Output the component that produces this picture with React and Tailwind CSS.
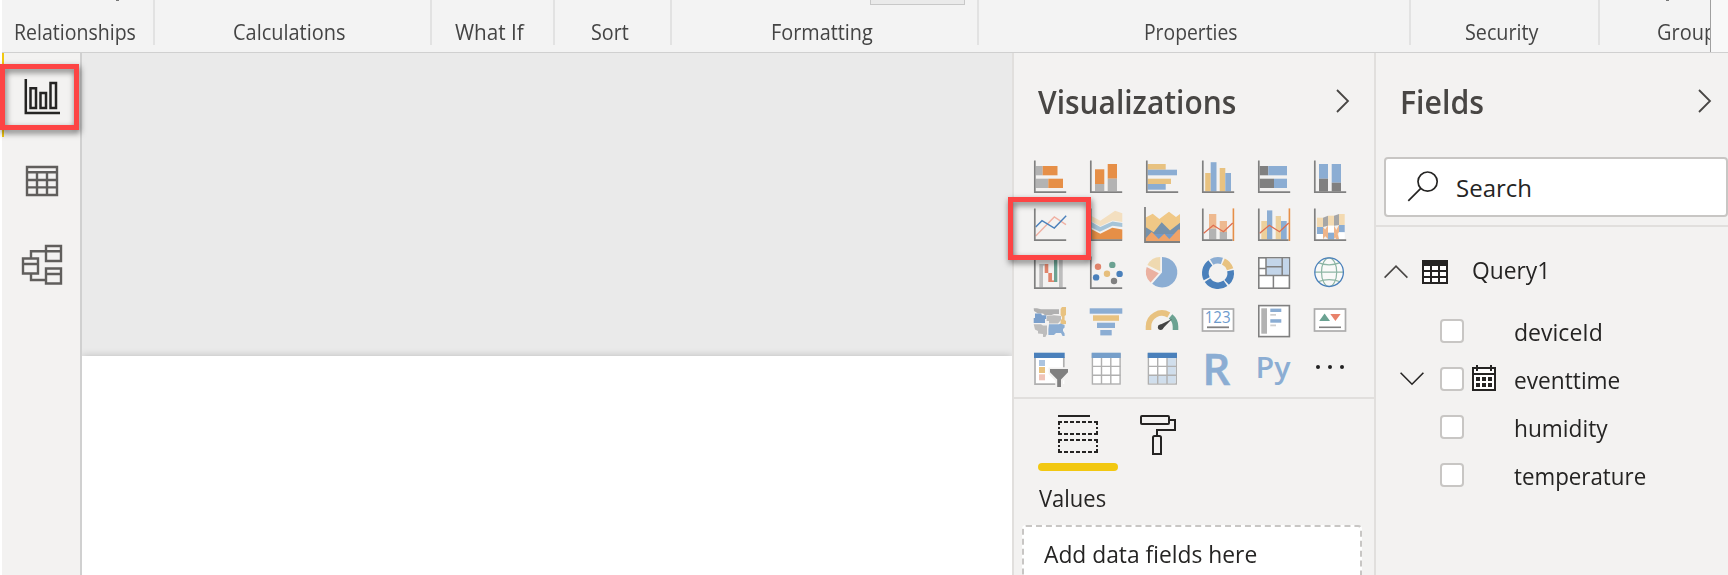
const AXIS = "M2.8 1.4V33.2H34.2";

function Tile({ children }) {
  return (
    <svg viewBox="0 0 36 36" className="h-9 w-9 overflow-visible">
      {children}
    </svg>
  );
}

function Axis() {
  return <path d={AXIS} fill="none" stroke="#808080" strokeWidth="1.7" />;
}

/* Filled rectangles given as [x1, y1, x2, y2, colour]. */
function Bars({ items }) {
  return items.map(([x1, y1, x2, y2, fill], i) => (
    <rect key={i} x={x1} y={y1} width={x2 - x1} height={y2 - y1} fill={fill} />
  ));
}

const G = "#b3b3b3";
const D = "#808080";
const O = "#e68f47";
const Y = "#e8c280";
const B = "#8badd3";
const N = "#4a80bb";

function polar(r, deg) {
  const a = (deg * Math.PI) / 180;
  return `${(18 + r * Math.sin(a)).toFixed(2)} ${(18 - r * Math.cos(a)).toFixed(2)}`;
}

function Arc({ from, to, color }) {
  return (
    <path
      d={`M${polar(12.7, from)}A12.7 12.7 0 0 1 ${polar(12.7, to)}`}
      fill="none"
      stroke={color}
      strokeWidth="6.6"
    />
  );
}

function VisualGrid() {
  return (
    <div className="grid grid-cols-[repeat(6,56px)] gap-y-3 pl-[18px]">
      <Tile>
        <Bars items={[[3.7, 7, 10.7, 16.3, G], [10.7, 7, 25.5, 16.3, O], [3.7, 19.7, 16.3, 29, G], [16.3, 19.7, 31, 29, O]]} />
        <Axis />
      </Tile>
      <Tile>
        <Bars items={[[7, 10.3, 16.3, 25, O], [7, 25, 16.3, 32, G], [19.7, 5, 29, 19.7, O], [19.7, 19.7, 29, 32, G]]} />
        <Axis />
      </Tile>
      <Tile>
        <Bars items={[[3.7, 5, 21.7, 10.7, Y], [3.7, 10.7, 33, 16.3, B], [3.7, 19.7, 27, 25, Y], [3.7, 25, 21.7, 30.7, B]]} />
        <Axis />
      </Tile>
      <Tile>
        <Bars items={[[5.2, 14, 10.7, 32.4, Y], [10.7, 3.2, 16.5, 32.4, B], [19.7, 9, 25.3, 32.4, Y], [25.3, 14, 31, 32.4, B]]} />
        <Axis />
      </Tile>
      <Tile>
        <Bars items={[[3.7, 7, 12.3, 16.3, D], [12.3, 7, 31, 16.3, B], [3.7, 19.7, 18, 29, D], [18, 19.7, 31, 29, B]]} />
        <Axis />
      </Tile>
      <Tile>
        <Bars items={[[7, 5, 16, 19.7, B], [7, 19.7, 16, 32.4, D], [19.7, 5, 29, 23.7, B], [19.7, 23.7, 29, 32.4, D]]} />
        <Axis />
      </Tile>

      <Tile>
        <path d="M3.7 29L22.3 10L34 17.7" fill="none" stroke="#f0b1a3" strokeWidth="1.4" />
        <path d="M3.7 20L10 13.7L22.3 21L34.2 8.7" fill="none" stroke={N} strokeWidth="1.4" />
        <Axis />
      </Tile>
      <Tile>
        <path d="M3 8.7L12.3 13.7L27 3.7L34.3 6.3V15L24.5 13.6L12.3 19.3L3 14Z" fill="#f3dfc0" />
        <path d="M3 14.8L12.3 20L24.5 14.6L34.3 16V20L24.5 18.7L11.8 24.8L3 20.3Z" fill="#a6c4d8" />
        <path d="M3 22L12.3 26.7L24.3 20.7L34.3 22.6V32.4H3Z" fill={O} />
        <Axis />
      </Tile>
      <Tile>
        <path d="M1.8 10.6L8.7 6.7L15.3 11.9L25 4.7L32 10L36 7V34.4H1.8Z" fill="#f0c886" />
        <path d="M1.8 20.2L9.7 25.3L17.7 15.3L26 23.5L36 15.8V34.4H1.8Z" fill="#7591ab" />
        <path d="M5 27H33V34.4H5Z" fill="#7399c6" />
        <path d="M1.8 31.3L7.7 24.7L14.7 32L20.3 26.7L25.3 32L34.3 22.5H36V34.4H1.8Z" fill="#f0a368" />
        <path d="M1 0V35H36" fill="none" stroke="#808080" strokeWidth="1.8" />
      </Tile>
      <Tile>
        <Bars items={[[9, 7, 16.3, 21.7, "#eeb98f"], [9, 21.7, 16.3, 32.4, G], [19.7, 14, 27, 25, "#eeb98f"], [19.7, 25, 27, 32.4, G]]} />
        <path d="M33.4 1.4V34" stroke={O} strokeWidth="1.6" />
        <path d="M2.8 1.4V33.2H32.5" fill="none" stroke="#808080" strokeWidth="1.7" />
        <path d="M3.7 26.3L13.3 18.3L23.5 24.7L32.7 16" fill="none" stroke="#de6e50" strokeWidth="1.3" />
      </Tile>
      <Tile>
        <Bars items={[[5.3, 14, 11, 32.4, "#ecd09c"], [11, 3.4, 16.3, 32.4, B], [19.7, 9, 25, 32.4, "#ecd09c"], [25, 14, 30.7, 32.4, B]]} />
        <path d="M33.4 1.4V34" stroke={O} strokeWidth="1.6" />
        <path d="M2.8 1.4V33.2H32.5" fill="none" stroke="#808080" strokeWidth="1.7" />
        <path d="M3.7 26.3L13.3 18.3L23.5 24.7L32.7 16" fill="none" stroke="#de6e50" strokeWidth="1.3" />
      </Tile>
      <Tile>
        <path d="M11 10.7L16 8.7V18.7L11 20ZM22 8.7L27 7V18L22 18.7Z" fill="#a6a6a6" />
        <path d="M11 27Q14 20 16 18.7V25.7Q13 29 11 32.4ZM11 20L16 26V32L11 27ZM22 18.7Q25 23 27 32H24Q22 29 22 25ZM22 27L27 18V25L22 32Z" fill="#efb58a" />
        <Bars
          items={[
            [5, 10.7, 11, 20, "#f3dab1"], [5, 20, 11, 27, B], [5, 27, 11, 32.4, "#fff"],
            [16, 8.7, 22, 18.7, "#f3dab1"], [16, 18.7, 22, 25.7, "#fff"], [16, 25.7, 22, 32.4, B],
            [27, 7, 32.7, 18, "#f3dab1"], [27, 18, 32.7, 25.3, B], [27, 25.3, 32.7, 32.4, "#fff"],
          ]}
        />
        <Axis />
      </Tile>

      <Tile>
        <Bars
          items={[
            [7.3, 9, 11, 32.4, "#bdbdbd"], [11, 9, 12.7, 10.6, "#bdbdbd"], [12.7, 9, 16.3, 18, "#e0846b"],
            [16.3, 18, 20, 27, "#e0846b"], [20, 25.4, 22, 27, "#e0846b"], [22, 4, 25.3, 27, "#6ba292"], [27, 4, 30.7, 32.4, "#bdbdbd"],
          ]}
        />
        <Axis />
      </Tile>
      <Tile>
        <circle cx="10" cy="11.7" r="3.2" fill="#e0846b" />
        <circle cx="24.3" cy="9.9" r="3.2" fill="#6ba292" />
        <circle cx="19" cy="18.8" r="3.2" fill="#e6be7b" />
        <circle cx="8.1" cy="22.4" r="3.2" fill={N} />
        <circle cx="31.6" cy="18.9" r="3.2" fill={N} />
        <circle cx="26" cy="26" r="3.2" fill="#808080" />
        <Axis />
      </Tile>
      <Tile>
        <path d="M18 17.5V2A15.2 15.2 0 1 1 8.2 28.7Z" fill={B} />
        <path d="M16.2 16.3V2A14.8 14.8 0 0 0 3.4 10Z" fill="#efd9b0" />
        <path d="M14.8 18.2L2.7 12A14.8 14.8 0 0 0 6.6 27.6Z" fill="#ebb1a1" />
      </Tile>
      <Tile>
        <Arc from={-30} to={18} color={B} />
        <Arc from={25} to={73} color="#e8c280" />
        <Arc from={79} to={137} color={N} />
        <Arc from={144} to={236} color={N} />
        <Arc from={243} to={323} color={N} />
      </Tile>
      <Tile>
        <rect x="2.8" y="2.8" width="30.6" height="30.4" fill="#fff" stroke="#808080" strokeWidth="1.6" />
        <path d="M10 3.6H33V20.4H10Z" fill="#c3d5e9" />
        <path d="M3 20.6H33.4M10 3V20.6M3 13.6H10M10 11.7H26.2M26.2 3V20.6M17.4 20.6V33" stroke="#808080" strokeWidth="1.5" />
      </Tile>
      <Tile>
        <circle cx="17.1" cy="17.2" r="14.3" fill="#fff" fillOpacity="0.5" />
        <g fill="none" stroke="#8db5a4" strokeWidth="1.2">
          <ellipse cx="17.1" cy="17.2" rx="7.6" ry="14.3" />
          <path d="M2.8 17.2H31.4M6 7.6Q17.1 12 28.2 7.6M6 26.8Q17.1 22.4 28.2 26.8" />
        </g>
        <circle cx="17.1" cy="17.2" r="14.3" fill="none" stroke={N} strokeWidth="1.3" />
      </Tile>

      <Tile>
        <path d="M1.7 5.3H5L9 6.3H27V11H22L19 12.3H13L11 10.6H6L2 8Z" fill="#b0b0b0" />
        <path d="M3 10.6H9L10 12.3H14.3V16H13V20H1.7V15H3Z" fill="#7a9fcb" />
        <path d="M15 13L22 12.3L29 13V17L26 20.4H17V18H14.5Z" fill="#bdbdbd" />
        <path d="M30 4H34V12L32.6 13V17L34 18V21L28.6 21.4V17L30 16V14L28.6 12V6Z" fill="#e8c280" />
        <path d="M1.7 21.3H9L11 22.4H15V31L13.4 34H11V31L6 30.4V28L3 26.6Z" fill="#bdbdbd" />
        <path d="M17 21.3H27L28.4 20.4L32.6 22V24.6L31 26V28L32.6 30.4V33H30.6L29 30H24L22 32H16.4V26Z" fill="#8badd3" />
      </Tile>
      <Tile>
        <Bars items={[[1.7, 5.3, 34.3, 10.7, B], [5, 12.3, 31, 17.8, Y], [9, 19.7, 27, 25, B], [12.3, 27, 23.7, 32.4, B]]} />
      </Tile>
      <Tile>
        <path d="M4.5 27V23.5A13.4 13.4 0 0 1 24.8 12" fill="none" stroke="#e8c280" strokeWidth="5.6" />
        <path d="M26.6 13.4A13.4 13.4 0 0 1 31.5 23.5V27" fill="none" stroke="#6ba292" strokeWidth="5.6" />
        <path d="M14.6 22.6L28 16L18.8 25.6Z" fill="#444" />
        <circle cx="16.6" cy="24.2" r="2.7" fill="#444" />
      </Tile>
      <Tile>
        <rect x="2.5" y="6" width="31" height="22" fill="#fff" stroke="#acacac" strokeWidth="1.7" />
        <text x="4.7" y="19.6" textLength="26" lengthAdjust="spacingAndGlyphs" fill="#6d9bcc" className="font-['Open_Sans'] text-[15.5px]">
          123
        </text>
        <path d="M7 24.3H29" stroke="#808080" strokeWidth="1.8" />
      </Tile>
      <Tile>
        <rect x="2.8" y="2.6" width="30.6" height="31" fill="#fff" stroke="#808080" strokeWidth="1.6" />
        <Bars items={[[5.3, 5.3, 11, 30.7, G], [14.3, 5.6, 25.3, 9, B], [14.3, 11, 20, 12.7, "#cfcfcf"], [14.3, 16.2, 25.3, 19.7, B], [14.3, 21.5, 20, 23.3, "#cfcfcf"]]} />
      </Tile>
      <Tile>
        <rect x="2.5" y="6" width="31" height="22" fill="#fff" stroke="#acacac" strokeWidth="1.7" />
        <path d="M7.2 18L12.6 10.6L18 18Z" fill="#6ba292" />
        <path d="M18.3 11H28.6L23.4 17.9Z" fill="#e8826b" />
        <path d="M7 24.3H29" stroke="#808080" strokeWidth="1.6" />
      </Tile>

      <Tile>
        <rect x="2.5" y="3" width="29.8" height="30" fill="#fff" />
        <path d="M3 6V33.1H23.5M31.8 6V16.5" fill="none" stroke="#b0b0b0" strokeWidth="1.7" />
        <Bars items={[[2, 1.7, 32.7, 7, N], [7, 9, 13, 15, "#abc4e0"], [7, 16, 13, 22, "#e8c280"], [7, 23.3, 13, 29.3, "#f0c4b8"]]} />
        <path d="M16.5 16.4H37.5V22L31 30V37H23.5V30L16.5 23Z" fill="#f3f2f1" />
        <path d="M18 18H36V21.3L29 28.4V36H25.2V28.4L18 21.3Z" fill="#808080" />
      </Tile>
      <Tile>
        <rect x="4.4" y="3" width="27.7" height="30" fill="#fff" stroke="#b0b0b0" strokeWidth="1.4" />
        <path d="M13.5 7V33M22.8 7V33M4 15.4H32.4M4 24.2H32.4" stroke="#b0b0b0" strokeWidth="1.4" />
        <rect x="3.7" y="1.7" width="29" height="5.3" fill="#769fca" />
      </Tile>
      <Tile>
        <rect x="4.4" y="3" width="27.9" height="30" fill="#fff" stroke="#b0b0b0" strokeWidth="1.4" />
        <path d="M23 7H31.6V32.3H5V24.2H23Z" fill="#d0deec" />
        <path d="M13.7 7V33M23 7V33M4 15.4H32.4M4 24.2H32.4" stroke="#b0b0b0" strokeWidth="1.4" />
        <rect x="3.7" y="1.7" width="29.3" height="5.3" fill={N} />
      </Tile>
      <Tile>
        <text x="2.3" y="33.8" fill={B} stroke={B} strokeWidth="0.5" className="font-['Open_Sans'] text-[44px] font-semibold">
          R
        </text>
      </Tile>
      <Tile>
        <text x="-0.4" y="27" textLength="35" lengthAdjust="spacingAndGlyphs" fill={B} className="font-['Open_Sans'] text-[29px] font-semibold">
          Py
        </text>
      </Tile>
      <Tile>
        <g fill="#222">
          <circle cx="6" cy="16" r="2" />
          <circle cx="18" cy="16" r="2" />
          <circle cx="30" cy="16" r="2" />
        </g>
      </Tile>
    </div>
  );
}

function RibbonGroup({ className, label, children }) {
  return (
    <div className={`relative flex h-[45px] shrink-0 items-end pb-[2.5px] ${className}`}>
      {children}
      <span className="origin-left text-[21px] leading-[22px] whitespace-nowrap text-[#444]">{label}</span>
    </div>
  );
}

function Ribbon() {
  return (
    <header className="flex h-[53px] shrink-0 overflow-hidden border-b border-[#d0d0d0] bg-[#f3f3f3]">
      <RibbonGroup className="w-[153px] border-r-2 border-[#e2e2e2] pl-[12px] [&>span]:scale-x-[0.93]" label="Relationships">
        <i className="absolute top-0 left-[114px] h-px w-[3px] bg-[#777]" />
      </RibbonGroup>
      <RibbonGroup className="w-[277px] border-r-2 border-[#e2e2e2] pl-[78px] [&>span]:scale-x-[0.95]" label="Calculations" />
      <RibbonGroup className="w-[123px] border-r-2 border-[#e2e2e2] pl-[23px] [&>span]:scale-x-[0.985]" label="What If" />
      <RibbonGroup className="w-[117px] border-r-2 border-[#e2e2e2] pl-[36px] [&>span]:scale-x-[0.94]" label="Sort" />
      <RibbonGroup className="w-[307px] border-r-2 border-[#e2e2e2] pl-[99px] [&>span]:scale-x-[0.945]" label="Formatting">
        <i className="absolute top-0 left-[198px] h-[5px] w-[95px] border border-t-0 border-[#c8c8c8] bg-[#eaeaea]" />
      </RibbonGroup>
      <RibbonGroup className="w-[432px] border-r-2 border-[#e2e2e2] pl-[165px] [&>span]:scale-x-[0.92]" label="Properties" />
      <RibbonGroup className="w-[189px] border-r-2 border-[#e2e2e2] pl-[54px] [&>span]:scale-x-[0.94]" label="Security" />
      <RibbonGroup className="w-[110px] overflow-hidden pl-[57px] [&>span]:scale-x-[0.95]" label="Groups">
        <i className="absolute top-0 left-[66px] h-px w-[3px] bg-[#777]" />
      </RibbonGroup>
      <div className="h-[53px] flex-1 border-b border-l border-[#a0a0a0] bg-[#f8f8f8]" />
    </header>
  );
}

function Sidebar() {
  return (
    <nav className="flex w-20 shrink-0 flex-col border-r-2 border-[#d0d0d0] bg-[#f3f2f1]">
      <div className="h-[84px] border-l-2 border-[#f2c811] pt-6 pl-[19px]">
        <svg viewBox="0 0 40 40" className="h-10 w-10" fill="none" stroke="#252423" strokeWidth="2.5">
          <path d="M2.8 2V36H37" />
          <path d="M7.5 11.2H13V31H7.5ZM17.5 16H23V31H17.5ZM27.5 6H33V31H27.5Z" />
        </svg>
      </div>
      <div className="h-[84px] pt-[26px] pl-[21px]">
        <svg viewBox="0 0 40 40" className="h-10 w-10" fill="none" stroke="#605e5c" strokeWidth="2.4">
          <path d="M4 4H34V32H4ZM4 9.2H34M4 17H34M4 24.4H34M14 9V32M24 9V32" />
        </svg>
      </div>
      <div className="h-[84px] pt-[22px] pl-[19px]">
        <svg viewBox="0 0 44 44" className="h-11 w-11" fill="none" stroke="#605e5c" strokeWidth="2.4">
          <path d="M25 3H40V18H25ZM25 8.2H40M25 25.5H40V40.5H25ZM25 31H40M2 15.5H17V30.5H2ZM2 21H17M10 15.5V8.2H25M10 30.5V37H25" />
        </svg>
      </div>
    </nav>
  );
}

function Chevron() {
  return (
    <svg viewBox="0 0 14 24" className="h-6 w-[14px]" fill="none" stroke="#484644" strokeWidth="1.8">
      <path d="M1 1L12 12L1 23" />
    </svg>
  );
}

function Visualizations() {
  return (
    <section className="flex w-[364px] shrink-0 flex-col border-x-2 border-[#e1dfdd] bg-[#f3f2f1]">
      <div className="flex h-[106px] shrink-0 items-start justify-between pt-[33px] pr-6 pl-6">
        <h2 className="origin-left scale-x-[0.935] text-[32px] leading-[32px] font-semibold text-[#484644]">Visualizations</h2>
        <div className="pt-[3px]">
          <Chevron />
        </div>
      </div>
      <VisualGrid />
      <div className="mt-[10px] flex h-[76px] shrink-0 items-start border-t-2 border-[#e1dfdd] pt-4 pl-6">
        <div className="flex h-14 w-20 flex-col items-center justify-between">
          <svg viewBox="0 0 40 40" className="h-10 w-10" fill="none" stroke="#252423" strokeWidth="2">
            <path d="M0 1H32" />
            <path d="M0 7H40M0 19H40M0 25H40M0 37H40" strokeDasharray="4 2" />
            <path d="M1 6V20M39 6V20M1 24V38M39 24V38" strokeDasharray="4 2 2 2" />
          </svg>
          <div className="h-2 w-20 rounded-full bg-[#f2c811]" />
        </div>
        <svg viewBox="0 0 36 40" className="ml-[22px] h-10 w-9" fill="none" stroke="#252423" strokeWidth="2">
          <rect x="1" y="1" width="28" height="8" rx="1" />
          <path d="M29 5H35V15H17V21" />
          <path d="M13 22.5Q13 21 14.5 21H19.5Q21 21 21 22.5V39H13Z" />
        </svg>
      </div>
      <p className="mt-[9px] ml-[25px] h-8 shrink-0 origin-left scale-x-[0.915] text-2xl leading-8 text-[#252423]">Values</p>
      <div className="mr-3 ml-2 mt-[11px] h-20 shrink-0 rounded border-2 border-dashed border-[#c8c6c4] bg-white pt-[11px] pl-[20px]">
        <p className="origin-left scale-x-[0.95] text-2xl leading-8 whitespace-nowrap text-[#252423]">Add data fields here</p>
      </div>
    </section>
  );
}

function Checkbox() {
  return <div className="h-6 w-6 shrink-0 rounded border-2 border-[#c8c6c4] bg-white" />;
}

function FieldRow({ name, expandable, className, children }) {
  return (
    <div className="flex h-12 items-start">
      <div className="flex h-6 w-16 items-center pl-6">
        {expandable && (
          <svg viewBox="0 0 24 14" className="h-[14px] w-6" fill="none" stroke="#252423" strokeWidth="1.6">
            <path d="M0.6 0.8L12 12.2L23.4 0.8" />
          </svg>
        )}
      </div>
      <Checkbox />
      <div className="flex w-[50px] items-start pl-2">{children}</div>
      <span className={`mt-px origin-left text-2xl leading-6 text-[#252423] ${className}`}>{name}</span>
    </div>
  );
}

function Fields() {
  return (
    <section className="flex flex-1 flex-col bg-[#f3f2f1]">
      <div className="flex h-[104px] shrink-0 items-start justify-between pt-[33px] pr-4 pl-6">
        <h2 className="origin-left scale-x-[0.945] text-[32px] leading-[32px] font-semibold text-[#484644]">Fields</h2>
        <div className="pt-[3px]">
          <Chevron />
        </div>
      </div>
      <div className="ml-2 flex h-[60px] shrink-0 items-start rounded border-2 border-[#c8c6c4] bg-white pt-3 pl-[21px]">
        <svg viewBox="0 0 32 32" className="h-8 w-8" fill="none" stroke="#252423" strokeWidth="1.7">
          <circle cx="20.6" cy="10.6" r="9.6" />
          <path d="M13.8 17.4L1.3 29.8" />
        </svg>
        <span className="mt-px ml-[17px] origin-left text-2xl leading-8 text-[#252423]">Search</span>
      </div>
      <div className="mt-2 flex h-[94px] shrink-0 items-start border-t-2 border-[#e1dfdd] pt-[33px] pl-2">
        <svg viewBox="0 0 24 14" className="mt-[5px] h-[14px] w-6" fill="none" stroke="#484644" strokeWidth="1.6">
          <path d="M0.6 12.6L12 1.2L23.4 12.6" />
        </svg>
        <svg viewBox="0 0 26 24" className="ml-[14px] h-6 w-[26px]">
          <rect width="26" height="24" fill="#252423" />
          <path d="M2 6H8V10H2ZM10 6H16V10H10ZM18 6H24V10H18ZM2 12H8V16H2ZM10 12H16V16H10ZM18 12H24V16H18ZM2 18H8V22H2ZM10 18H16V22H10ZM18 18H24V22H18Z" fill="#fff" />
        </svg>
        <span className="-mt-[6px] ml-6 origin-left scale-x-[0.95] text-2xl leading-8 text-[#252423]">Query1</span>
      </div>
      <FieldRow name="deviceId" className="scale-x-[0.96]" />
      <FieldRow name="eventtime" className="scale-x-[0.945]" expandable>
        <svg viewBox="0 0 24 26" className="-mt-0.5 h-[26px] w-6 shrink-0">
          <path d="M1 3H23V25H1Z" fill="#fff" stroke="#252423" strokeWidth="2" />
          <path d="M1 9H23M5 0V6M19 0V6" stroke="#252423" strokeWidth="2" />
          <path d="M4 12H8V16H4ZM10 12H14V16H10ZM16 12H20V16H16ZM4 18H8V22H4ZM10 18H14V22H10ZM16 18H20V22H16Z" fill="#252423" />
        </svg>
      </FieldRow>
      <FieldRow name="humidity" className="scale-x-[0.945]" />
      <FieldRow name="temperature" className="scale-x-[0.93]" />
    </section>
  );
}

export default function App() {
  return (
    <div className="relative flex h-[575px] w-[1728px] flex-col overflow-hidden bg-white pl-0.5 font-['Open_Sans',sans-serif]">
      <Ribbon />
      <div className="flex h-[522px]">
        <Sidebar />
        <main className="flex min-w-0 flex-1 flex-col overflow-hidden bg-[#eaeaea] pt-[303px]">
          <div className="flex-1 bg-white shadow-[0_0_8px_rgba(0,0,0,0.2)]" />
        </main>
        <Visualizations />
        <div className="flex w-[352px] shrink-0">
          <Fields />
        </div>
      </div>
      <div className="absolute top-16 left-0 h-[66px] w-[79px] border-[5px] border-[#fd4444] drop-shadow-[1px_3px_3px_rgba(0,0,0,0.55)]" />
      <div className="absolute top-[197px] left-[1008px] h-[63px] w-[83px] border-[5px] border-[#fd4444] drop-shadow-[1px_3px_3px_rgba(0,0,0,0.55)]" />
    </div>
  );
}
